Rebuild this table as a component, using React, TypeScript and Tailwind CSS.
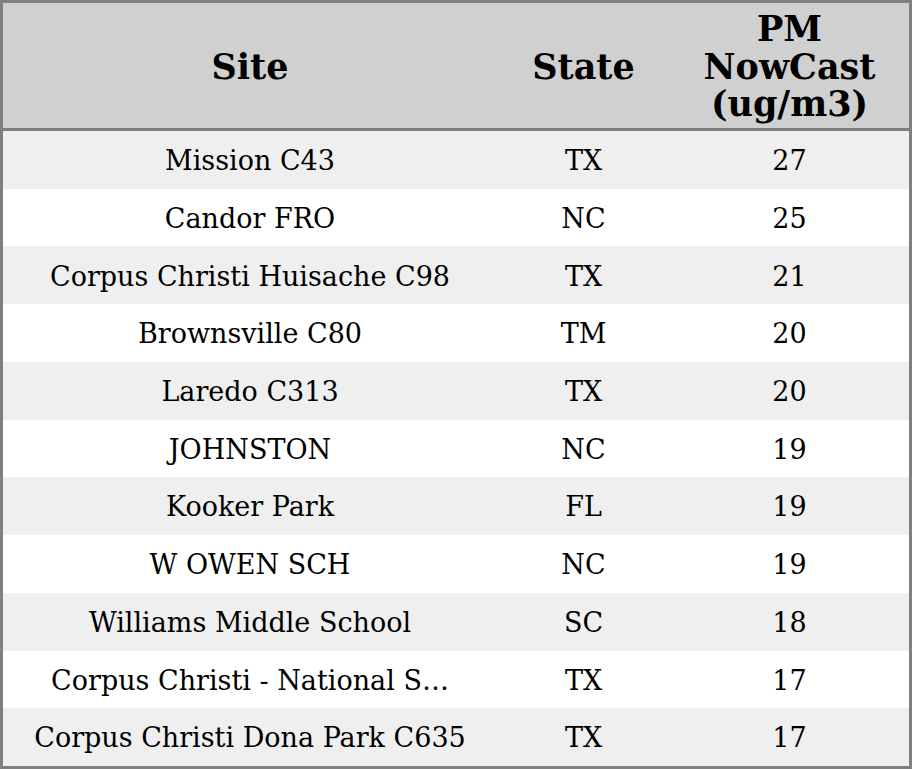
import React from "react";

const rows = [
  { site: "Mission C43", state: "TX", pm: "27" },
  { site: "Candor FRO", state: "NC", pm: "25" },
  { site: "Corpus Christi Huisache C98", state: "TX", pm: "21" },
  { site: "Brownsville C80", state: "TM", pm: "20" },
  { site: "Laredo C313", state: "TX", pm: "20" },
  { site: "JOHNSTON", state: "NC", pm: "19" },
  { site: "Kooker Park", state: "FL", pm: "19" },
  { site: "W OWEN SCH", state: "NC", pm: "19" },
  { site: "Williams Middle School", state: "SC", pm: "18" },
  { site: "Corpus Christi - National S...", state: "TX", pm: "17" },
  { site: "Corpus Christi Dona Park C635", state: "TX", pm: "17" },
];

export default function App() {
  return (
    <div className="w-[912px] h-[769px] border-[3px] border-[#808080] flex flex-col text-black font-['DejaVu_Serif',serif]">
      {/* header */}
      <div className="h-[128px] shrink-0 grid grid-cols-[494px_173px_1fr] bg-[#d0d0d0] border-b-[3px] border-[#808080] text-[35px] font-bold leading-[37.5px] text-center pt-[2px]">
        <div className="flex items-center justify-center">Site</div>
        <div className="flex items-center justify-center">State</div>
        <div className="flex items-center justify-center">
          PM
          <br />
          NowCast
          <br />
          (ug/m3)
        </div>
      </div>
      <div className="flex-1 grid grid-rows-11 text-[27px]">
        {rows.map((r, i) => (
          <div
            key={i}
            className={
              "grid grid-cols-[494px_173px_1fr] items-center text-center pt-[3px] " +
              (i % 2 === 0 ? "bg-[#efefef]" : "bg-white")
            }
          >
            <div className="whitespace-nowrap">{r.site.replace("...", "…")}</div>
            <div>{r.state}</div>
            <div>{r.pm}</div>
          </div>
        ))}
      </div>
    </div>
  );
}
